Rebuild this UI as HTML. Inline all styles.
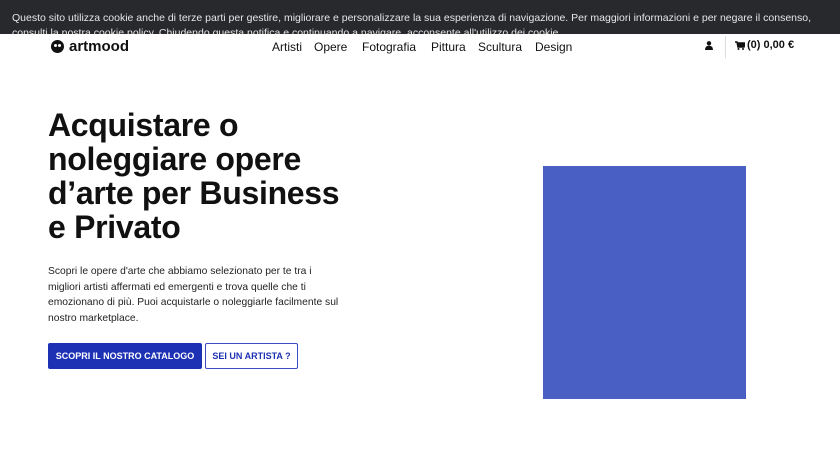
<!DOCTYPE html>
<html><head><meta charset="utf-8"><style>
*{margin:0;padding:0;box-sizing:border-box}
body{width:840px;height:472px;background:#fff;font-family:"Liberation Sans",sans-serif;position:relative;overflow:hidden;color:#111}
.cookie{position:absolute;left:0;top:0;width:840px;height:34px;background:#27292d;color:#e6e6e6;font-size:10.5px;overflow:hidden}
.cookie .l1{position:absolute;left:12px;top:12px;white-space:nowrap}
.cookie .l2{position:absolute;left:12px;top:27px;white-space:nowrap}
.hdr{position:absolute;left:0;top:34px;width:840px;height:26px;background:#fff}
.logo{position:absolute;left:51px;top:4px;font-weight:bold;font-size:15px;color:#111;display:flex;align-items:center}
.logo .d{width:13px;height:13px;border-radius:50%;background:#111;margin-right:5px;position:relative}
.logo .d:before,.logo .d:after{content:"";position:absolute;top:4px;width:3px;height:3px;background:#fff;border-radius:50%}
.logo .d:before{left:3px}.logo .d:after{left:7px}
.nav{position:absolute;top:6px;left:272px;font-size:12px;color:#111}
.nav span{position:absolute;white-space:nowrap}
.right{position:absolute;top:5px;font-size:11px;font-weight:bold}
h1{position:absolute;left:48px;top:108px;font-size:32px;line-height:34px;font-weight:bold;letter-spacing:-0.3px;color:#111}
p{position:absolute;left:48px;top:264px;width:296px;font-size:10.3px;line-height:15.5px;color:#222}
.b1{position:absolute;left:48px;top:343px;width:154px;height:26px;background:#1d31b4;color:#fff;font-size:9px;font-weight:bold;display:flex;align-items:center;justify-content:center;border-radius:2px}
.b2{position:absolute;left:205px;top:343px;width:93px;height:26px;border:1px solid #3a4bc4;color:#1d31b4;font-size:9px;font-weight:bold;display:flex;align-items:center;justify-content:center;border-radius:2px}
.img{position:absolute;left:543px;top:166px;width:203px;height:233px;background:#4a5fc3}
</style></head><body>
<div class="cookie">
<div class="l1">Questo sito utilizza cookie anche di terze parti per gestire, migliorare e personalizzare la sua esperienza di navigazione. Per maggiori informazioni e per negare il consenso,</div>
<div class="l2">consulti la nostra cookie policy. Chiudendo questa notifica e continuando a navigare, acconsente all'utilizzo dei cookie.</div>
</div>
<div class="hdr">
<div class="logo"><div class="d"></div>artmood</div>
<div class="nav"><span style="left:0">Artisti</span><span style="left:42px">Opere</span><span style="left:90px">Fotografia</span><span style="left:159px">Pittura</span><span style="left:206px">Scultura</span><span style="left:263px">Design</span></div>
<svg style="position:absolute;left:705px;top:7px" width="8" height="9" viewBox="0 0 8 9"><circle cx="4" cy="2.3" r="2.2" fill="#111"/><path d="M0 9 Q0 4.8 4 4.8 Q8 4.8 8 9Z" fill="#111"/></svg>
<div style="position:absolute;left:725px;top:2px;width:1px;height:22px;background:#ddd"></div>
<svg style="position:absolute;left:735px;top:7px" width="10" height="9" viewBox="0 0 10 9"><path d="M0 1H2L3 6H9L10 2H2.5" stroke="#111" stroke-width="1.5" fill="#111"/><circle cx="3.5" cy="8" r="1" fill="#111"/><circle cx="8" cy="8" r="1" fill="#111"/></svg>
<div class="right" style="left:747px">(0) 0,00 €</div>
</div>
<h1>Acquistare o<br>noleggiare opere<br>d’arte per Business<br>e Privato</h1>
<p>Scopri le opere d'arte che abbiamo selezionato per te tra i migliori artisti affermati ed emergenti e trova quelle che ti emozionano di più. Puoi acquistarle o noleggiarle facilmente sul nostro marketplace.</p>
<div class="b1">SCOPRI IL NOSTRO CATALOGO</div>
<div class="b2">SEI UN ARTISTA ?</div>
<div class="img"></div>
</body></html>
